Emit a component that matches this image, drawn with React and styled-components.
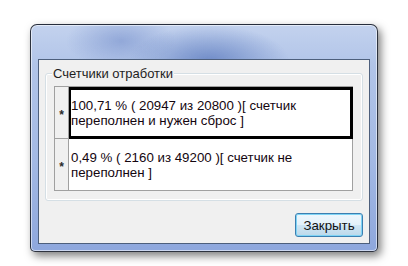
import React from "react";
import styled, { createGlobalStyle } from "styled-components";

const GlobalStyle = createGlobalStyle`
  html, body {
    margin: 0;
    padding: 0;
    background: #ffffff;
  }
  body {
    font-family: "Liberation Sans", Arial, sans-serif;
  }
`;

const Page = styled.div`
  width: 408px;
  height: 266px;
  padding: 24px 0 0 30px;
  box-sizing: border-box;
`;

const Window = styled.div`
  width: 348px;
  height: 228px;
  box-sizing: border-box;
  padding: 34px 7px 7px 7px;
  border: 1px solid rgba(20, 24, 32, 0.85);
  border-radius: 7px 7px 5px 5px;
  background:
    radial-gradient(ellipse 80px 36px at 178px 36px, rgba(112, 140, 200, 1), rgba(112, 140, 200, 0)),
    radial-gradient(ellipse 55px 28px at 90px 16px, rgba(132, 156, 210, 0.75), rgba(132, 156, 210, 0)),
    linear-gradient(180deg, #c3d2ee 0%, #b1c4e8 18%, #a3b9e4 60%, #8ea7dd 100%);
  box-shadow: 3px 4px 8px rgba(0, 0, 0, 0.5), inset 0 0 0 1px rgba(255, 255, 255, 0.55);
`;

const Client = styled.div`
  height: 100%;
  box-sizing: border-box;
  border: 1px solid #4d5f7c;
  background: #f0f0f0;
  display: flex;
  flex-direction: column;
`;

const GroupBox = styled.fieldset`
  margin: 6px 6px 0 6px;
  padding: 5px 9px 9px 8px;
  border: 1px solid #d5dfe5;
  border-radius: 3px;
  box-shadow: inset 0 0 0 1px #ffffff;
`;

const Legend = styled.legend`
  margin-left: -2px;
  padding: 0 1px;
  background: #f0f0f0;
  font-size: 13px;
  line-height: 15px;
  color: #1e1e1e;
`;

const Grid = styled.div`
  display: grid;
  grid-template-columns: 14px 1fr;
  border-top: 1px solid #a0a0a0;
  border-left: 1px solid #a0a0a0;
  background: #ffffff;
`;

const RowHeader = styled.div`
  height: 52px;
  box-sizing: border-box;
  background: #f0f0f0;
  border-right: 1px solid #a0a0a0;
  border-bottom: 1px solid #a0a0a0;
  display: flex;
  align-items: center;
  justify-content: center;
  padding-top: 5px;
  font-size: 12px;
  font-weight: bold;
  color: #2a2a2a;
`;

const Cell = styled.div`
  height: 52px;
  box-sizing: border-box;
  border-right: 1px solid ${(p) => (p.$selected ? "#000" : "#a0a0a0")};
  border-bottom: 1px solid ${(p) => (p.$selected ? "#000" : "#a0a0a0")};
  box-shadow: ${(p) =>
    p.$selected ? "inset 0 0 0 2px #000, inset 0 3px 0 #000" : "none"};
  padding: 0 8px 0 2px;
  display: flex;
  align-items: center;
  font-size: 13.3px;
  line-height: 15px;
  color: #14060f;
`;

const Footer = styled.div`
  margin-top: auto;
  display: flex;
  justify-content: flex-end;
  padding: 0 6px 6px 0;
`;

const Button = styled.button`
  width: 68px;
  height: 24px;
  border: 1px solid #3c7fb1;
  border-radius: 3px;
  background: linear-gradient(180deg, #eef7fd 0%, #e3f1fa 48%, #cfe6f4 52%, #bcd8ea 100%);
  box-shadow: inset 0 0 0 1px #7fd4f5;
  font-family: "Liberation Sans", Arial, sans-serif;
  font-size: 13.3px;
  color: #111;
  padding: 0;
`;

const rows = [
  {
    text: "100,71 % ( 20947 из 20800 )[ счетчик переполнен и нужен сброс ]",
    selected: true,
  },
  {
    text: "0,49 % ( 2160 из 49200 )[ счетчик не переполнен ]",
    selected: false,
  },
];

export default function App() {
  return (
    <Page>
      <GlobalStyle />
      <Window>
        <Client>
          <GroupBox>
            <Legend>Счетчики отработки</Legend>
            <Grid>
              {rows.map((r, i) => (
                <React.Fragment key={i}>
                  <RowHeader>*</RowHeader>
                  <Cell $selected={r.selected}>{r.text}</Cell>
                </React.Fragment>
              ))}
            </Grid>
          </GroupBox>
          <Footer>
            <Button>Закрыть</Button>
          </Footer>
        </Client>
      </Window>
    </Page>
  );
}
